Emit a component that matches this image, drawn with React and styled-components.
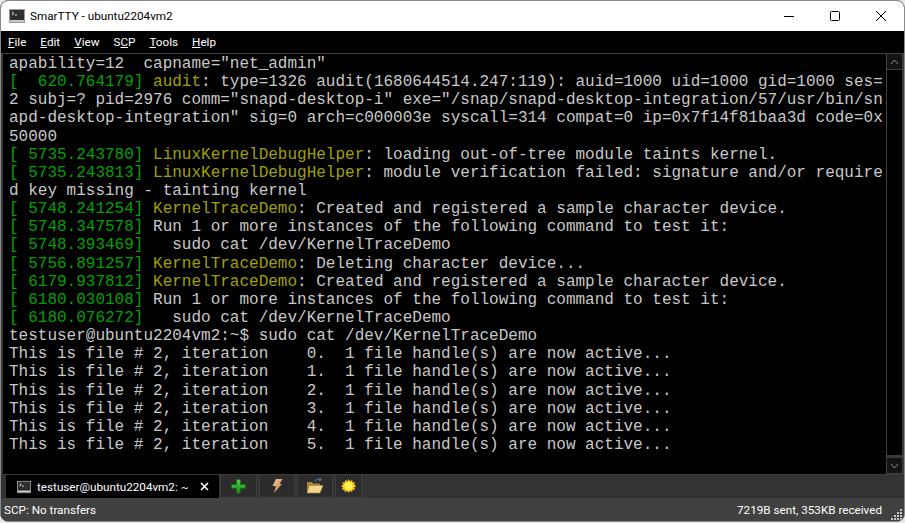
import React from 'react';
import styled, {createGlobalStyle} from 'styled-components';

const GlobalStyle = createGlobalStyle`
  html, body {
    margin: 0;
    padding: 0;
    background: #e8e8e8;
  }
`;

const Window = styled.div`
  width: 905px;
  height: 522px;
  box-sizing: border-box;
  display: flex;
  flex-direction: column;
  overflow: hidden;
  background: #3a3a3a;
  border: 1px solid #8a8a8a;
  border-radius: 8px;
  font-family: Roboto, "Open Sans", sans-serif;
  font-size: 11.7px;
`;

const TitleBar = styled.div`
  height: 30px;
  flex: none;
  display: flex;
  align-items: center;
  background: #fff;
  color: #000;
  padding-left: 8px;
`;

const TitleText = styled.span`
  margin-left: 5px;
  flex: 1;
`;

const WinButton = styled.div`
  width: 46px;
  height: 30px;
  display: flex;
  align-items: center;
  justify-content: center;
`;

const MenuBar = styled.div`
  height: 22px;
  flex: none;
  display: flex;
  align-items: center;
  gap: 14px;
  background: #000;
  color: #fff;
  padding-left: 7px;
`;

const Body = styled.div`
  height: 421px;
  flex: none;
  display: flex;
  margin: 0 1px 0 2px;
  border-top: 1px solid #404040;
  box-sizing: border-box;
  background: #000;
`;

const Terminal = styled.div`
  flex: 1;
  padding: 1px 0 0 6px;
  font-family: "Liberation Mono", monospace;
  font-size: 16px;
  color: #c8c8c8;
`;

const Line = styled.div`
  height: 18.15px;
  line-height: 18.15px;
  white-space: pre;
`;

const Stamp = styled.span`
  color: #00a000;
`;

const Tag = styled.span`
  color: #a0a000;
`;

const ScrollBar = styled.div`
  width: 17px;
  flex: none;
  display: flex;
  flex-direction: column;
  background: #3a3a3a;
  border-left: 1px solid #404040;
  border-right: 1px solid #404040;
  box-sizing: border-box;
`;

const ScrollTrack = styled.div`
  flex: 1;
  background: #000;
  margin-bottom: 3px;
`;

const ScrollButton = styled.div`
  height: 16px;
  flex: none;
  display: flex;
  align-items: center;
  justify-content: center;
  background: #141414;
  border-bottom: 1px solid #404040;
  box-sizing: border-box;
`;

const TabBar = styled.div`
  height: 24px;
  flex: none;
  display: flex;
  padding-left: 5px;
  border-top: 1px solid #3a3a3a;
  box-sizing: border-box;
  background: #333333;
`;

const ActiveTab = styled.div`
  width: 213px;
  display: flex;
  align-items: center;
  background: #000;
  color: #fff;
  padding-left: 11px;
  box-sizing: border-box;
`;

const TabLabel = styled.span`
  margin-left: 6px;
  flex: 1;
`;

const CloseIcon = styled.svg`
  margin-right: 10px;
`;

const ToolButton = styled.div`
  width: ${p => p.$width}px;
  margin-left: ${p => p.$gap}px;
  display: flex;
  align-items: center;
  justify-content: center;
  background: #2c2c2c;
  border: 1px solid #3f3f3f;
  border-top: none;
  box-sizing: border-box;
`;

const StatusBar = styled.div`
  height: 23px;
  flex: none;
  display: flex;
  align-items: center;
  justify-content: space-between;
  background: #414141;
  color: #fff;
  padding: 0 22px 0 3px;
  position: relative;
`;

const Grip = styled.svg`
  position: absolute;
  right: 1px;
  bottom: 1px;
`;

const lines = [
  {text: 'apability=12  capname="net_admin"'},
  {stamp: '[  620.764179] ', tag: 'audit', text: ': type=1326 audit(1680644514.247:119): auid=1000 uid=1000 gid=1000 ses='},
  {text: '2 subj=? pid=2976 comm="snapd-desktop-i" exe="/snap/snapd-desktop-integration/57/usr/bin/sn'},
  {text: 'apd-desktop-integration" sig=0 arch=c000003e syscall=314 compat=0 ip=0x7f14f81baa3d code=0x'},
  {text: '50000'},
  {stamp: '[ 5735.243780] ', tag: 'LinuxKernelDebugHelper', text: ': loading out-of-tree module taints kernel.'},
  {stamp: '[ 5735.243813] ', tag: 'LinuxKernelDebugHelper', text: ': module verification failed: signature and/or require'},
  {text: 'd key missing - tainting kernel'},
  {stamp: '[ 5748.241254] ', tag: 'KernelTraceDemo', text: ': Created and registered a sample character device.'},
  {stamp: '[ 5748.347578] ', text: 'Run 1 or more instances of the following command to test it:'},
  {stamp: '[ 5748.393469] ', text: '  sudo cat /dev/KernelTraceDemo'},
  {stamp: '[ 5756.891257] ', tag: 'KernelTraceDemo', text: ': Deleting character device...'},
  {stamp: '[ 6179.937812] ', tag: 'KernelTraceDemo', text: ': Created and registered a sample character device.'},
  {stamp: '[ 6180.030108] ', text: 'Run 1 or more instances of the following command to test it:'},
  {stamp: '[ 6180.076272] ', text: '  sudo cat /dev/KernelTraceDemo'},
  {text: 'testuser@ubuntu2204vm2:~$ sudo cat /dev/KernelTraceDemo'},
  {text: 'This is file # 2, iteration    0.  1 file handle(s) are now active...'},
  {text: 'This is file # 2, iteration    1.  1 file handle(s) are now active...'},
  {text: 'This is file # 2, iteration    2.  1 file handle(s) are now active...'},
  {text: 'This is file # 2, iteration    3.  1 file handle(s) are now active...'},
  {text: 'This is file # 2, iteration    4.  1 file handle(s) are now active...'},
  {text: 'This is file # 2, iteration    5.  1 file handle(s) are now active...'},
];

const TerminalIcon = ({size}) => (
  <svg width={size} height={size} viewBox="0 0 16 16">
    <rect x="0.5" y="1.5" width="15" height="13" fill="#2e2e2e" stroke="#9a9a9a"/>
    <rect x="1" y="12" width="14" height="2" fill="#c8c8c8"/>
    <path d="M3 4l2 1.5L3 7M6 7h2" fill="none" stroke="#e8e8e8" strokeWidth="1"/>
  </svg>
);

const PlusIcon = () => (
  <svg width="15" height="15" viewBox="0 0 15 15">
    <defs>
      <linearGradient id="plusFill" x1="0" y1="0" x2="0" y2="1">
        <stop offset="0" stopColor="#4fd04f"/>
        <stop offset="1" stopColor="#128a12"/>
      </linearGradient>
    </defs>
    <path d="M5.5 0.5h4v5h5v4h-5v5h-4v-5h-5v-4h5z" fill="url(#plusFill)" stroke="#0f6a0f" strokeWidth="0.6" strokeLinejoin="round"/>
  </svg>
);

const BoltIcon = () => (
  <svg width="14" height="16" viewBox="0 0 14 16">
    <defs>
      <linearGradient id="boltFill" x1="0" y1="0" x2="1" y2="1">
        <stop offset="0" stopColor="#f6d0a0"/>
        <stop offset="1" stopColor="#c87838"/>
      </linearGradient>
    </defs>
    <path d="M6 1h6.5L9.5 6H12L4 15l2-7H2.5z" fill="url(#boltFill)"/>
  </svg>
);

const FolderIcon = () => (
  <svg width="18" height="16" viewBox="0 0 18 16">
    <path d="M1 4h5l1 1.5h7V15H1z" fill="#a88440"/>
    <path d="M3.5 7.5H17L14 15H1z" fill="#f2d48a" stroke="#a8843c" strokeWidth="0.6"/>
    <path d="M9 3.5c1-2 3-2.8 5-2.3M13.8 0l1.2 1.8-2 .8" fill="none" stroke="#4a7aa8" strokeWidth="1.2"/>
  </svg>
);

const SunIcon = () => (
  <svg width="15" height="15" viewBox="0 0 17 17">
    <path d="M8.5 0l1.7 2.6 2.5-1.6.4 3 3-.4-1.3 2.7 2.7 1.7-2.7 1.7 1.3 2.7-3-.4-.4 3-2.5-1.6-1.7 2.6-1.7-2.6-2.5 1.6-.4-3-3 .4 1.3-2.7L0 8l2.7-1.7-1.3-2.7 3 .4.4-3 2.5 1.6z" fill="#f4c820"/>
    <circle cx="8.5" cy="8.2" r="4.4" fill="#fff050"/>
  </svg>
);

const App = () => (
  <>
    <GlobalStyle/>
    <Window>
      <TitleBar>
        <TerminalIcon size={16}/>
        <TitleText>SmarTTY - ubuntu2204vm2</TitleText>
        <WinButton>
          <svg width="10" height="10" viewBox="0 0 10 10"><path d="M0 5.5h10" stroke="#000"/></svg>
        </WinButton>
        <WinButton>
          <svg width="10" height="10" viewBox="0 0 10 10"><rect x="0.5" y="0.5" width="9" height="9" rx="1" fill="none" stroke="#000"/></svg>
        </WinButton>
        <WinButton>
          <svg width="10" height="10" viewBox="0 0 10 10"><path d="M0 0l10 10M10 0L0 10" stroke="#000"/></svg>
        </WinButton>
      </TitleBar>
      <MenuBar>
        <span><u>F</u>ile</span>
        <span><u>E</u>dit</span>
        <span><u>V</u>iew</span>
        <span>S<u>C</u>P</span>
        <span><u>T</u>ools</span>
        <span><u>H</u>elp</span>
      </MenuBar>
      <Body>
        <Terminal>
          {lines.map((line, i) => (
            <Line key={i}>
              {line.stamp && <Stamp>{line.stamp}</Stamp>}
              {line.tag && <Tag>{line.tag}</Tag>}
              {line.text}
            </Line>
          ))}
        </Terminal>
        <ScrollBar>
          <ScrollButton>
            <svg width="9" height="6" viewBox="0 0 9 6"><path d="M1 5l3.5-4L8 5" fill="none" stroke="#8a8a8a"/></svg>
          </ScrollButton>
          <ScrollTrack/>
          <ScrollButton>
            <svg width="9" height="6" viewBox="0 0 9 6"><path d="M1 1l3.5 4L8 1" fill="none" stroke="#8a8a8a"/></svg>
          </ScrollButton>
        </ScrollBar>
      </Body>
      <TabBar>
        <ActiveTab>
          <TerminalIcon size={14}/>
          <TabLabel>testuser@ubuntu2204vm2: ~</TabLabel>
          <CloseIcon width="9" height="9" viewBox="0 0 9 9"><path d="M1 1l7 7M8 1L1 8" stroke="#fff" strokeWidth="1.6"/></CloseIcon>
        </ActiveTab>
        <ToolButton $width={37} $gap={1}><PlusIcon/></ToolButton>
        <ToolButton $width={36} $gap={2}><BoltIcon/></ToolButton>
        <ToolButton $width={36} $gap={2}><FolderIcon/></ToolButton>
        <ToolButton $width={27} $gap={2}><SunIcon/></ToolButton>
      </TabBar>
      <StatusBar>
        <span>SCP: No transfers</span>
        <span>7219B sent, 353KB received</span>
        <Grip width="12" height="12" viewBox="0 0 12 12">
          <path d="M9 1h2v2H9zM6 4h2v2H6zM9 4h2v2H9zM3 7h2v2H3zM6 7h2v2H6zM9 7h2v2H9zM0 10h2v2H0zM3 10h2v2H3zM6 10h2v2H6zM9 10h2v2H9z" fill="#c8c8c8"/>
        </Grip>
      </StatusBar>
    </Window>
  </>
);

export default App;
